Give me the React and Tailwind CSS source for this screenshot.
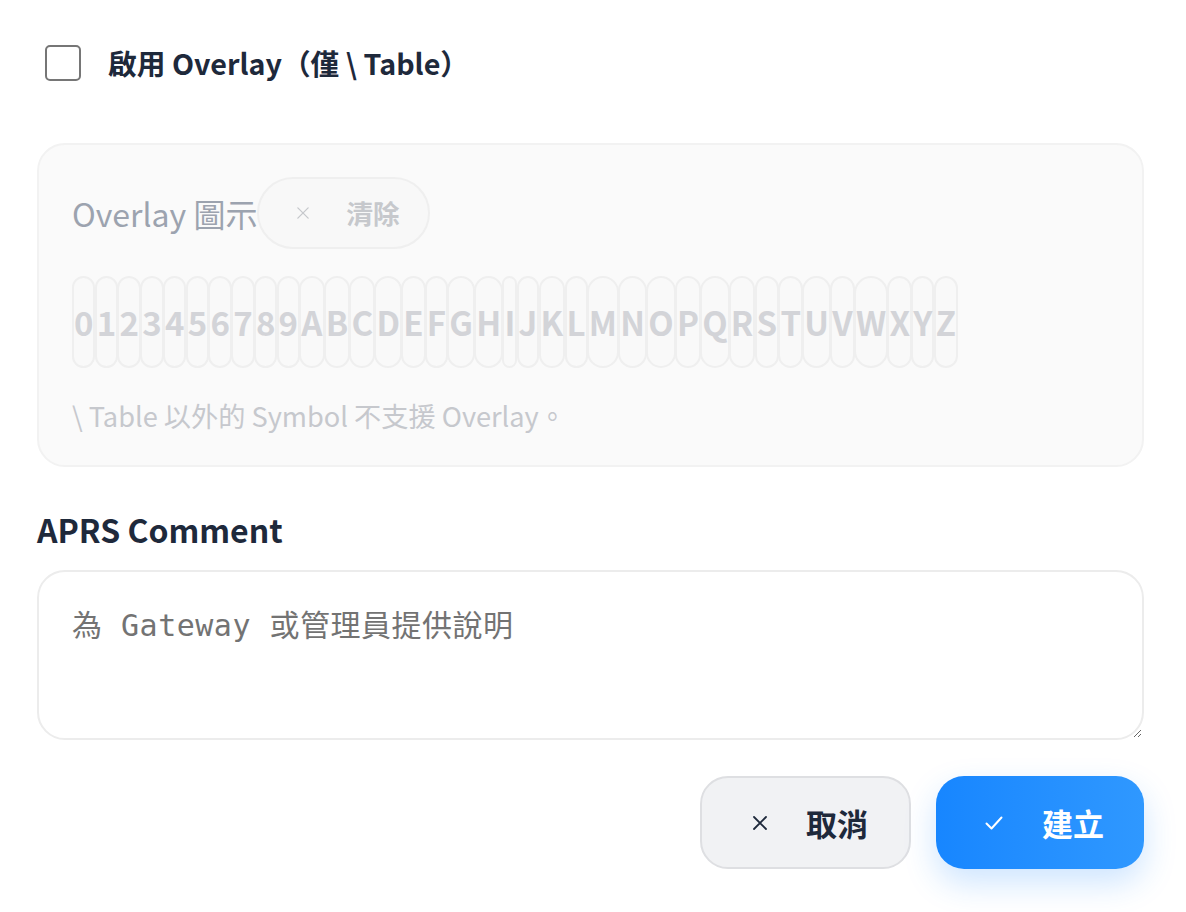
const chars = '0123456789ABCDEFGHIJKLMNOPQRSTUVWXYZ'.split('');

function XIcon({ size = 14, className = '', strokeWidth = 2 }) {
  return (
    <svg width={size} height={size} viewBox="0 0 14 14" className={className} fill="none" stroke="currentColor" strokeWidth={strokeWidth} strokeLinecap="round">
      <path d="M1 1l12 12M13 1L1 13" />
    </svg>
  );
}

function CheckIcon() {
  return (
    <svg width="18" height="14" viewBox="0 0 18 14" fill="none" stroke="currentColor" strokeWidth="2" strokeLinecap="round" strokeLinejoin="round">
      <path d="M1.5 7.5l5 5L16.5 1.5" />
    </svg>
  );
}

export default function App() {
  return (
    <div
      className="w-[1186px] min-h-[912px] bg-white pl-[37px] pr-[42px] pt-[45px]"
      style={{ fontFamily: '"Noto Sans CJK TC", "Noto Sans", sans-serif' }}
    >
      <label className="flex items-center gap-[27px] pl-[8px]">
        <span className="w-[36px] h-[36px] rounded-[5px] border-2 border-[#767676] bg-white" />
        <span className="text-[28.7px] font-bold text-[#1e293b] leading-none">啟用 Overlay（僅 \ Table）</span>
      </label>

      <div className="mt-[62px] rounded-[28px] border-2 border-[#f2f2f2] bg-[#fafafa] px-[33px] pt-[32px] pb-[30px]">
        <div className="flex items-center">
          <span className="text-[32px] text-[#9ca3af] leading-none">Overlay 圖示</span>
          <button className="h-[72px] rounded-full border-2 border-[#efefef] bg-[#f8f8f8] flex items-center pl-[38px] pr-[29px] gap-[37px] text-[#c6c8cc]">
            <XIcon size={12} strokeWidth={1.5} />
            <span className="text-[26.5px] font-bold leading-none">清除</span>
          </button>
        </div>
        <div className="mt-[27px] flex">
          {chars.map((c, i) => (
            <button
              key={c}
              className={`h-[92px] rounded-full border-2 border-[#efefef] bg-[#f9f9f9] text-[33px] font-bold text-[#d3d4d8] leading-none px-0 ${i === 0 ? '' : '-ml-[0.75px]'}`}
            >
              {c}
            </button>
          ))}
        </div>
        <p className="mt-[28px] text-[27.2px] text-[#c6c8cd] leading-[39px]">\ Table 以外的 Symbol 不支援 Overlay。</p>
      </div>

      <h3 className="mt-[40px] text-[32px] font-bold text-[#1e293b] leading-[44px]">APRS Comment</h3>

      <textarea
        className="mt-[19px] block w-full h-[170px] rounded-[28px] border-2 border-[#ececec] bg-white px-[33px] pt-[33px] text-[30px] leading-[42px] tracking-[0.5px] outline-none placeholder:text-[#737373]"
        style={{ fontFamily: '"DejaVu Sans Mono", "Noto Sans CJK TC", monospace' }}
        placeholder="為 Gateway 或管理員提供說明"
      />

      <div className="mt-[36px] flex justify-end gap-[25px]">
        <button className="h-[93px] w-[211px] rounded-[28px] border-2 border-[#dedfe2] bg-[#f1f2f4] flex items-center pl-[51px] gap-[39px] text-[#1e293b]">
          <XIcon size={14} strokeWidth={1.8} />
          <span className="text-[31px] font-bold leading-none">取消</span>
        </button>
        <button className="h-[93px] w-[208px] rounded-[28px] bg-linear-to-r from-[#1786ff] to-[#2f98ff] flex items-center pl-[49px] gap-[39px] text-white shadow-[0_14px_32px_rgba(30,136,255,0.22)]">
          <CheckIcon />
          <span className="text-[31px] font-bold leading-none">建立</span>
        </button>
      </div>
    </div>
  );
}
